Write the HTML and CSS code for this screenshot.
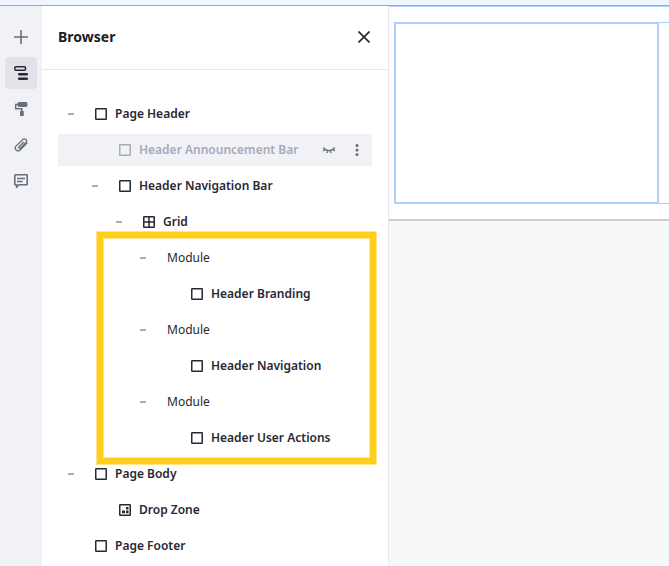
FILE: index.html
```html
<!DOCTYPE html>
<html lang="en">
<head>
<meta charset="utf-8">
<title>Browser</title>
<link rel="stylesheet" href="styles.css">
</head>
<body>
<svg class="defs" width="0" height="0">
  <symbol id="box" viewBox="0 0 12 12"><rect x=".75" y=".75" width="10.5" height="10.5" rx=".5" fill="none" stroke="currentColor" stroke-width="1.5"/></symbol>
  <symbol id="grid" viewBox="0 0 12 12"><rect x=".75" y=".75" width="10.5" height="10.5" rx=".5" fill="none" stroke="currentColor" stroke-width="1.5"/><path d="M6 1v10M1 6h10" stroke="currentColor" stroke-width="1.5"/></symbol>
  <symbol id="drop" viewBox="0 0 12 12"><rect x=".75" y=".75" width="10.5" height="10.5" rx=".5" fill="none" stroke="currentColor" stroke-width="1.5"/><path d="M7 3h2.5v2.5H7zM7 6.6h2.5v2.7H7zM3 6.6h3v2.7H3z" fill="currentColor"/></symbol>
</svg>
<div class="topbar"></div>
<div class="app">
  <nav class="rail">
    <button class="tool"><svg width="14" height="14" viewBox="0 0 14 14"><path d="M7 0v14M0 7h14" stroke="currentColor" stroke-width="1.6"/></svg></button>
    <button class="tool active"><svg width="14" height="14" viewBox="0 0 14 14"><rect x=".75" y=".75" width="10.8" height="3.5" rx="1.2" fill="none" stroke="currentColor" stroke-width="1.5"/><rect x="4" y="7" width="10" height="2.5" rx="1.2" fill="currentColor"/><rect x="4" y="11.4" width="10" height="2.5" rx="1.2" fill="currentColor"/></svg></button>
    <button class="tool"><svg width="14" height="14" viewBox="0 0 14 14"><rect x="3.6" y="0" width="9.8" height="5" rx="1.4" fill="currentColor"/><path d="M4 2.5H1.7v4.2h6.1v3" fill="none" stroke="currentColor" stroke-width="1.5"/><rect x="6" y="9" width="3.8" height="5" rx=".6" fill="currentColor"/></svg></button>
    <button class="tool"><svg width="14" height="14" viewBox="0 0 14 14"><path d="M9.8 4 5 8.800a.9.9 0 0 0 1.300 1.300l5.900-5.800a2.200 2.200 0 0 0-3.100-3L1.700 8.400a2.900 2.900 0 0 0 4 4l7.500-7.500" fill="none" stroke="currentColor" stroke-width="1.300"/></svg></button>
    <button class="tool"><svg width="14" height="14" viewBox="0 0 14 14"><path d="M1.400.8h11.200q.6 0 .6.6v8.800q0 .6-.6.6H5L2.600 13.200V10.800H1.400q-.6 0-.6-.6V1.400q0-.6.6-.6z" fill="none" stroke="currentColor" stroke-width="1.600"/><path d="M3 4.500h8M3 7.400h5.700" stroke="currentColor" stroke-width="1.500"/></svg></button>
  </nav>
  <section class="panel">
    <header class="head"><h1>Browser</h1><svg width="12" height="12" viewBox="0 0 12 12"><path d="M.5.5l11 11M11.500.5l-11 11" stroke="currentColor" stroke-width="1.700"/></svg></header>
    <div class="tree">
      <div class="row"><span class="toggle open"></span><svg class="icon"><use href="#box"/></svg><span>Page Header</span></div>
      <div class="row l1 muted"><span class="toggle"></span><svg class="icon"><use href="#box"/></svg><span>Header Announcement Bar</span>
        <span class="actions"><svg width="14" height="12" viewBox="0 0 14 12"><path d="M1.200 3.800q5.800 6 11.600 0M2.800 5.400 1.200 7M5.500 6.700 5 9M8.500 6.700 9 9M11.200 5.400 12.800 7" fill="none" stroke="currentColor" stroke-width="1.400"/></svg><svg width="4" height="14" viewBox="0 0 4 14"><circle cx="2" cy="2.500" r="1.500"/><circle cx="2" cy="7" r="1.500"/><circle cx="2" cy="11.500" r="1.500"/></svg></span></div>
      <div class="row l1"><span class="toggle open"></span><svg class="icon"><use href="#box"/></svg><span>Header Navigation Bar</span></div>
      <div class="row l2"><span class="toggle open"></span><svg class="icon"><use href="#grid"/></svg><span>Grid</span></div>
      <div class="row l3 module"><span class="toggle open"></span><span>Module</span></div>
      <div class="row l4"><span class="toggle"></span><svg class="icon"><use href="#box"/></svg><span>Header Branding</span></div>
      <div class="row l3 module"><span class="toggle open"></span><span>Module</span></div>
      <div class="row l4"><span class="toggle"></span><svg class="icon"><use href="#box"/></svg><span>Header Navigation</span></div>
      <div class="row l3 module"><span class="toggle open"></span><span>Module</span></div>
      <div class="row l4"><span class="toggle"></span><svg class="icon"><use href="#box"/></svg><span>Header User Actions</span></div>
      <div class="row"><span class="toggle open"></span><svg class="icon"><use href="#box"/></svg><span>Page Body</span></div>
      <div class="row l1"><span class="toggle"></span><svg class="icon"><use href="#drop"/></svg><span>Drop Zone</span></div>
      <div class="row"><span class="toggle"></span><svg class="icon"><use href="#box"/></svg><span>Page Footer</span></div>
      <div class="highlight"></div>
    </div>
  </section>
  <main class="canvas">
    <div class="page"><div class="cell"></div><div class="next"></div></div>
  </main>
</div>
</body>
</html>
```
FILE: styles.css
```css
* { box-sizing: border-box; }
body { margin: 0; height: 566px; overflow: hidden; display: flex; flex-direction: column; font-family: "Noto Sans", sans-serif; color: #272833; background: #fff; }
.defs { display: none; }
.topbar { height: 6px; flex: none; background: #f0f5ff; border-bottom: 1px solid #80acff; }
.app { flex: 1; display: flex; min-height: 0; }
.rail { width: 42px; flex: none; padding: 15px 5px; display: flex; flex-direction: column; gap: 4px; background: #f1f2f5; }
.tool { width: 32px; height: 32px; padding: 0; border: 0; border-radius: 4px; background: none; color: #6b6c7e; display: flex; align-items: center; justify-content: center; }
.tool.active { background: #e2e3e8; color: #272833; }
.panel { width: 347px; flex: none; border-right: 1px solid #e7e7ed; overflow: hidden; }
.head { height: 64px; padding: 0 18px 2px 16px; border-bottom: 1px solid #e7e7ea; display: flex; align-items: center; justify-content: space-between; }
h1 { margin: 0; font-size: 14px; line-height: 21px; font-weight: 700; color: #1c1c24; }
.tree { position: relative; padding: 28px 16px 0; display: flex; flex-direction: column; gap: 4px; font-size: 12px; line-height: 18px; font-weight: 600; white-space: nowrap; }
.row { height: 32px; flex: none; display: flex; align-items: center; }
.l1 { padding-left: 24px; }
.l2 { padding-left: 48px; }
.l3 { padding-left: 72px; }
.l4 { padding-left: 96px; }
.toggle { width: 37px; height: 2px; padding-left: 10px; flex: none; }
.open::before { content: ""; display: block; width: 6px; height: 2px; background: #a7a9bc; }
.icon { width: 12px; height: 12px; margin-right: 8px; flex: none; }
.module { font-weight: 400; }
.muted { background: #f1f2f5; color: #a7a9bc; }
.actions { margin-left: auto; padding-right: 13px; display: flex; align-items: center; gap: 19px; color: #6b6c7e; fill: #6b6c7e; }
.highlight { position: absolute; left: 55px; top: 162px; width: 279px; height: 232px; border: 6px solid #ffce1a; box-shadow: 0 0 0 1px #ffe68c, inset 0 0 0 1px #ffe68c; }
.canvas { flex: 1; min-width: 0; background: #f7f8fa; }
.page { height: 214px; padding: 15px 0 15px 5px; background: #fff; border-top: 1px solid #b1d0ff; border-bottom: 1px solid #b9cbf5; box-shadow: 0 1px 0 #cdced9; display: flex; }
.cell { width: 265px; height: 182px; flex: none; border: 2px solid #b0cdff; }
.next { flex: 1; height: 182px; border: solid #b0cdff; border-width: 1px 0; }
```
